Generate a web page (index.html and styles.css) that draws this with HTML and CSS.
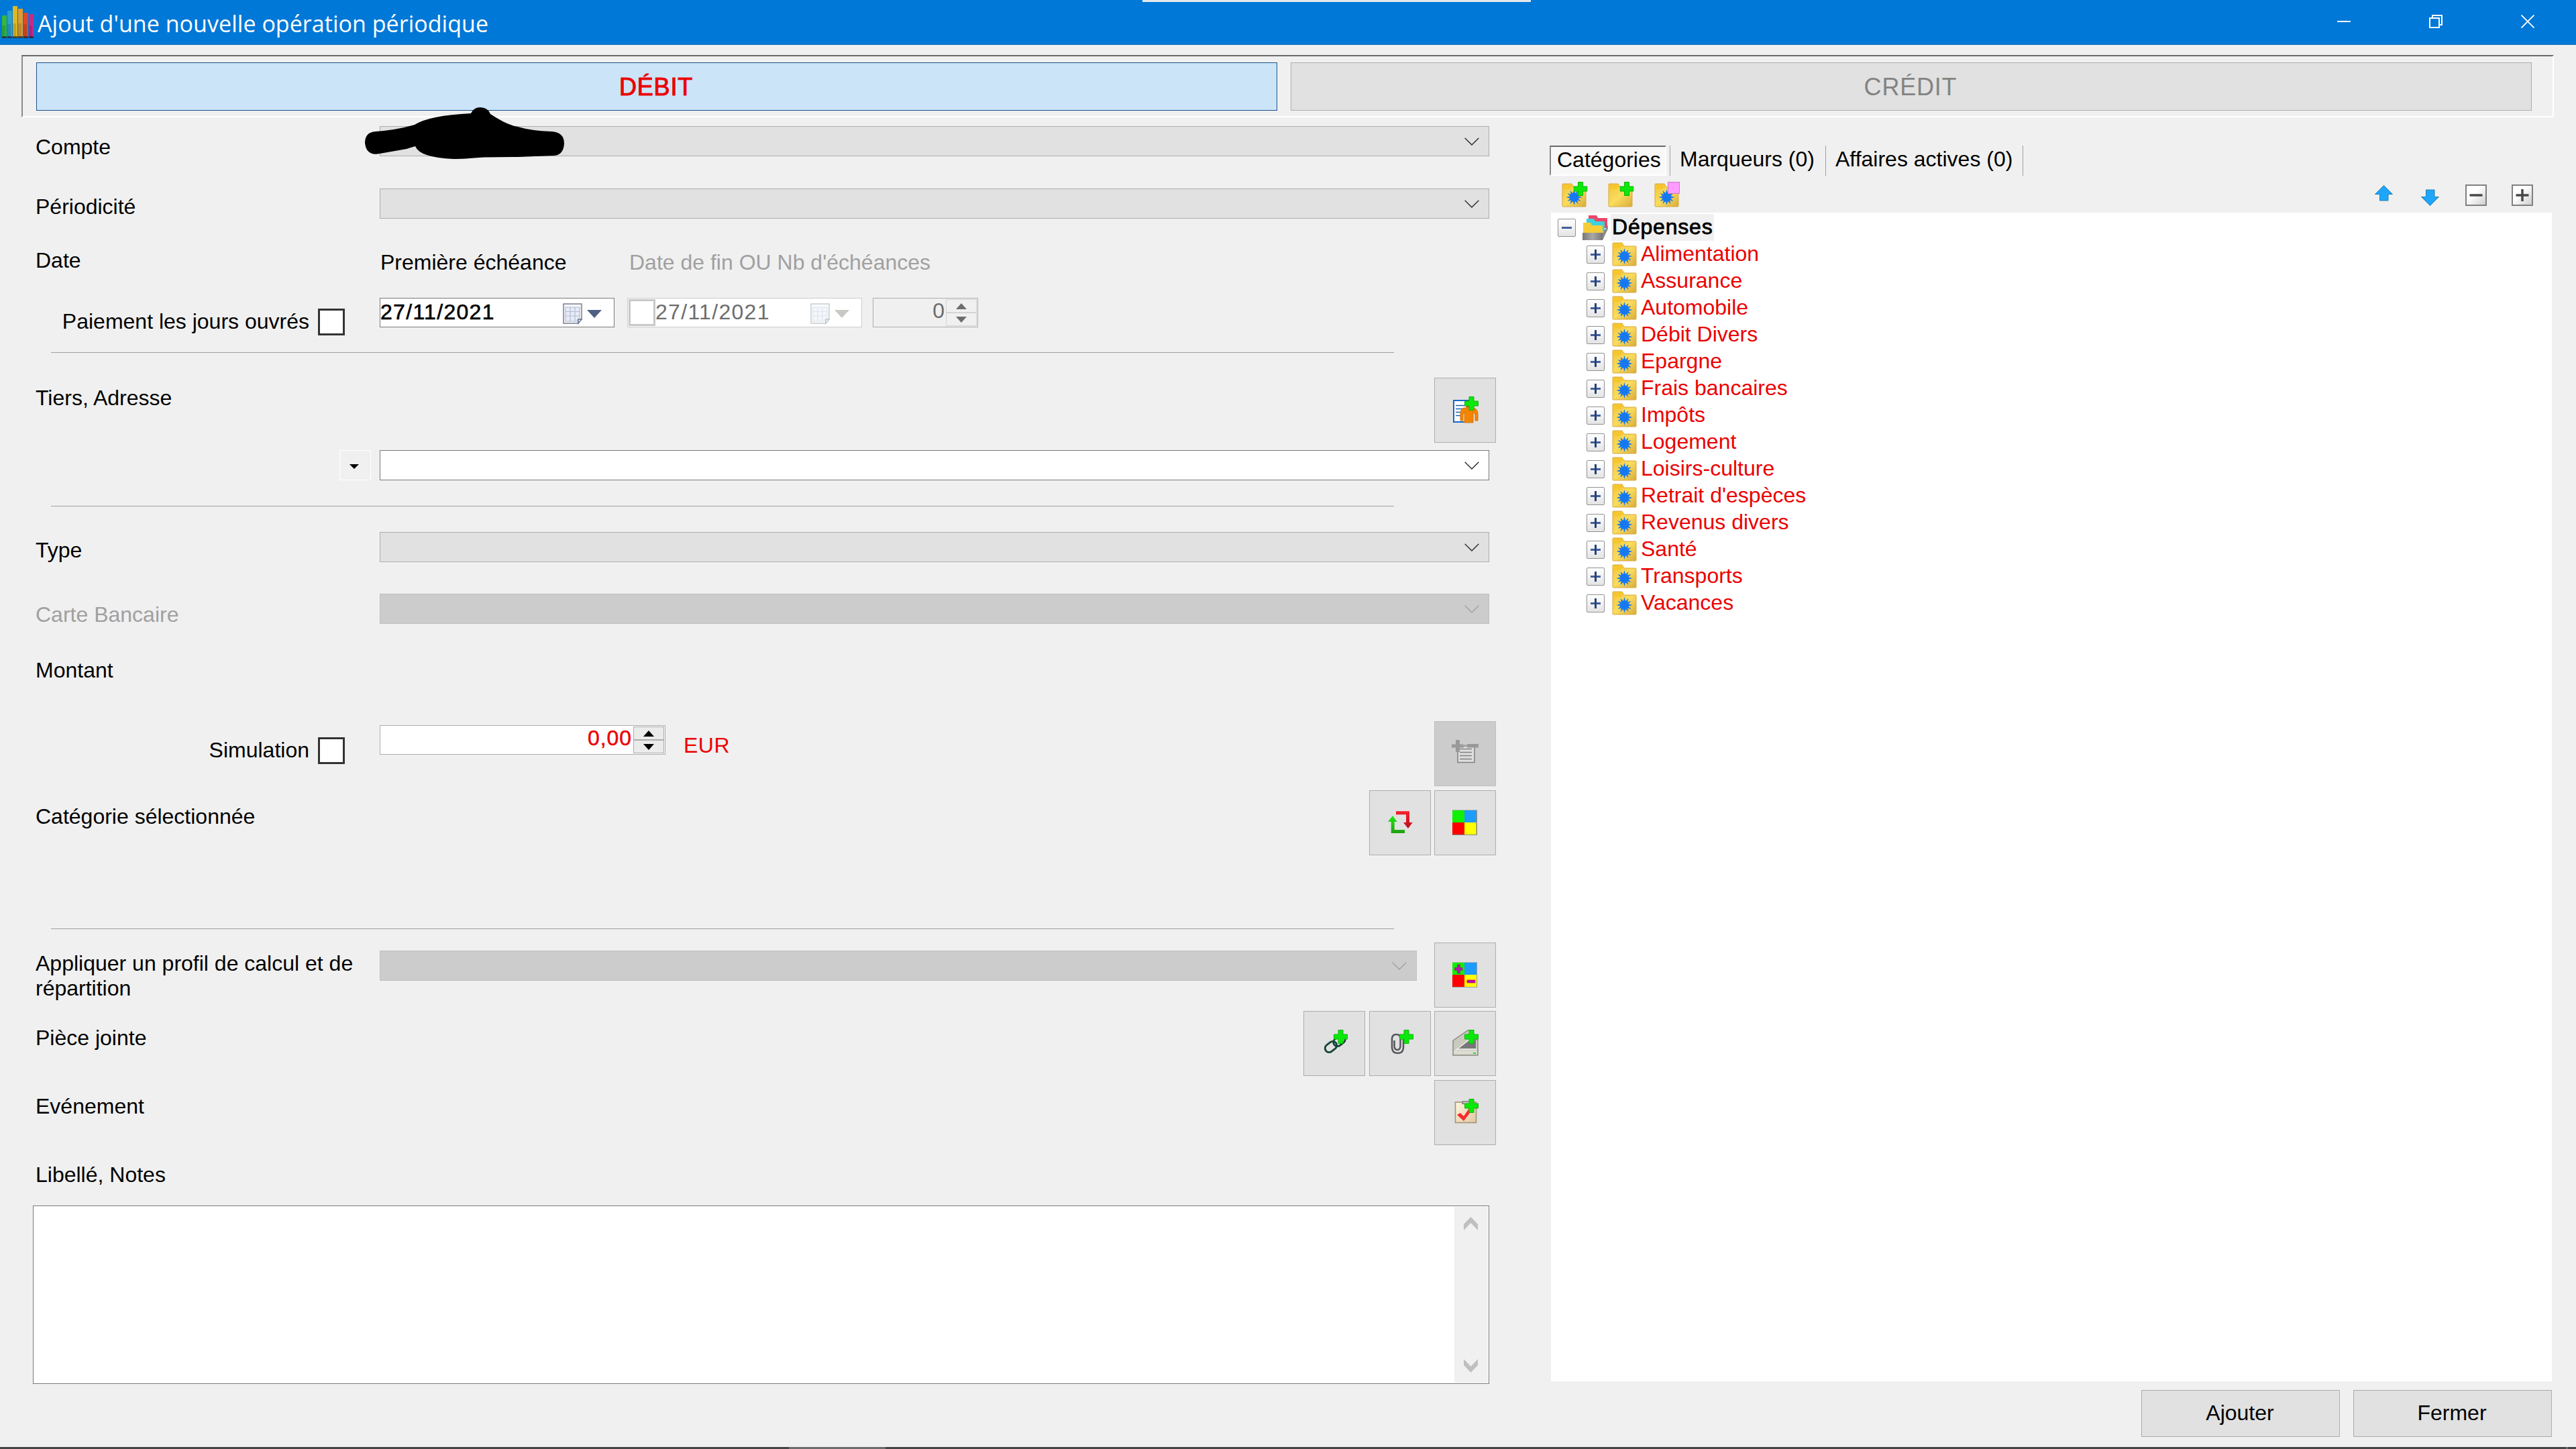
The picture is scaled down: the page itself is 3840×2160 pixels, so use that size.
FILE: index.html
```
<!DOCTYPE html>
<html lang="fr">
<head>
    <meta charset="UTF-8">
    <meta name="viewport" content="width=device-width, initial-scale=1.0">
    <title>Ajout d'une nouvelle opération périodique</title>
    <link rel="stylesheet" href="styles.css">
</head>
<body>
    <!-- Shared icon shapes -->
    <svg class="defs" width="0" height="0">
        <defs>
            <linearGradient id="gFolder" x1="0" y1="0" x2="1" y2="1">
                <stop offset="0" stop-color="#f0c43c"/>
                <stop offset="0.5" stop-color="#fbdc5c"/>
                <stop offset="1" stop-color="#d9ac3c"/>
            </linearGradient>
            <linearGradient id="gBox" x1="0" y1="0" x2="1" y2="1">
                <stop offset="0.4" stop-color="#ffffff"/>
                <stop offset="1" stop-color="#cccccc"/>
            </linearGradient>
            <linearGradient id="gGrey" x1="0" y1="0" x2="1" y2="0">
                <stop offset="0" stop-color="#777777"/>
                <stop offset="0.5" stop-color="#a8a8a8"/>
                <stop offset="1" stop-color="#777777"/>
            </linearGradient>
            <linearGradient id="gPaper" x1="0" y1="0" x2="1" y2="1">
                <stop offset="0" stop-color="#fff6e0"/>
                <stop offset="1" stop-color="#e0c8a0"/>
            </linearGradient>
            <linearGradient id="gRed" x1="0" y1="0" x2="0" y2="1">
                <stop offset="0" stop-color="#f8202c"/>
                <stop offset="1" stop-color="#b8101c"/>
            </linearGradient>
            <linearGradient id="gGreen" x1="0" y1="0" x2="0" y2="1">
                <stop offset="0" stop-color="#20e814"/>
                <stop offset="1" stop-color="#20a010"/>
            </linearGradient>
        </defs>
        <symbol id="chevron" viewBox="0 0 22 12">
            <path d="M0.7 0.7L11 11L21.3 0.7" fill="none" stroke="currentColor" stroke-width="1.5"/>
        </symbol>
        <symbol id="plus" viewBox="0 0 21 21">
            <path d="M7 .5h7V7h6.500v7H14v6.500H7V14H.5V7H7z" fill="#0be90b" stroke="#0bb40b"/>
        </symbol>
        <symbol id="folder" viewBox="0 0 37 36">
            <path d="M1 2q0-1 1-1h13l3 5h17q1 0 1 1v27q0 1-1 1H2q-1 0-1-1z" fill="url(#gFolder)" stroke="#d6a83a"/>
            <path d="M1.500 2h14l2 4h-3l-2 3h-11z" fill="#f6c62e"/>
        </symbol>
        <symbol id="star" viewBox="-12 -12 24 24">
            <path d="M0-12L1.700-6L6-10L4.600-4.600L10-6L6-1.700L12 0L6 1.700L10 6L4.600 4.600L6 10L1.700 6L0 12L-1.700 6L-6 10L-4.600 4.600L-10 6L-6 1.700L-12 0L-6-1.700L-10-6L-4.600-4.600L-6-10L-1.700-6z" fill="#1578f0"/>
        </symbol>
        <symbol id="category" viewBox="0 0 37 36">
            <use href="#folder" width="37" height="36"/>
            <use href="#star" x="6.500" y="9" width="24" height="24"/>
        </symbol>
        <symbol id="calendar" viewBox="0 0 29 32">
            <path d="M1 1h27v23h-5v6H1z" fill="#f4f6fb" stroke="#7a8090" stroke-width="1.500"/>
            <path d="M4 6h21v18h-3v3H4z" fill="#e6ecf7"/>
            <path d="M4 6h21v18h-3v3H4zM4 12.500h21M4 19h21M11 6v21M18 6v21" fill="none" stroke="#b4bccf" stroke-width="1.200"/>
            <path d="M23 30v-6h5z" fill="#fff" stroke="#6a7590" stroke-width="1.500"/>
        </symbol>
    </svg>

    <div class="titlebar">
        <svg class="app-icon" width="50" height="50" viewBox="0 0 50 50">
            <rect x="2" y="15" width="7" height="33" fill="#35b83c"/><rect x="10" y="8" width="7" height="40" fill="#2a9fd0"/>
            <rect x="18" y="1" width="7" height="47" fill="#d9b92c"/><rect x="26" y="5" width="7" height="43" fill="#e79a24"/>
            <rect x="34" y="11" width="7" height="37" fill="#dc4a2e"/><rect x="42" y="13" width="7" height="35" fill="#c22c8c"/>
            <path d="M2 30h5v18H2zM10 28h5v20h-5zM18 27h5v21h-5zM26 27h5v21h-5zM34 28h5v20h-5zM42 30h5v18h-5z" fill="#000" opacity="0.120"/>
            <path d="M2 46h7v3H2zM10 46h7v3h-7zM18 46h7v3h-7zM26 46h7v3h-7zM34 46h7v3h-7zM42 46h7v3h-7z" fill="#222" opacity="0.700"/>
        </svg>
        <span class="title">Ajout d'une nouvelle opération périodique</span>
        <div class="window-controls">
            <svg width="20" height="20" viewBox="0 0 20 20"><path d="M0 10h20" stroke="#fff" stroke-width="2"/></svg>
            <svg width="20" height="20" viewBox="0 0 20 20"><path d="M1 5h14v14H1zM5 5V1h14v14h-4" fill="none" stroke="#fff" stroke-width="2"/></svg>
            <svg width="20" height="20" viewBox="0 0 20 20"><path d="M.5.5l19 19M19.500.5l-19 19" stroke="#fff" stroke-width="1.800"/></svg>
        </div>
        <div class="top-strip"></div>
    </div>

    <div class="type-box">
        <button class="type-btn active">DÉBIT</button>
        <button class="type-btn">CRÉDIT</button>
    </div>

    <div class="main">
        <div class="form">
            <div class="row row-compte">
                <label>Compte</label>
                <div class="combo"><svg><use href="#chevron"/></svg></div>
            </div>
            <div class="row row-periode">
                <label>Périodicité</label>
                <div class="combo"><svg><use href="#chevron"/></svg></div>
            </div>
            <div class="row row-date">
                <label>Date</label>
                <span class="date-title">Première échéance</span>
                <span class="date-title muted">Date de fin OU Nb d'échéances</span>
            </div>
            <div class="row row-dates">
                <div class="check-cell"><span>Paiement les jours ouvrés</span><i class="checkbox"></i></div>
                <div class="date-field">
                    <b>27/11/2021</b>
                    <svg class="cal" width="29" height="32"><use href="#calendar"/></svg>
                    <i class="tri"></i>
                </div>
                <div class="date-field disabled">
                    <i class="checkbox"></i><b>27/11/2021</b>
                    <svg class="cal" width="29" height="32"><use href="#calendar"/></svg>
                    <i class="tri"></i>
                </div>
                <div class="spinner small">
                    <span>0</span>
                    <div class="arrows"><div><i class="up"></i></div><div><i class="down"></i></div></div>
                </div>
            </div>
            <div class="separator"></div>

            <div class="row row-tiers">
                <label>Tiers, Adresse</label>
                <button class="icon-btn">
                    <svg viewBox="1 1 90 95">
                        <rect x="29" y="34" width="24" height="32" fill="#fff" stroke="#1466c8" stroke-width="2"/>
                        <path d="M32 41.500h18M32 46.500h16M32 51.500h9M32 56.500h9" stroke="#1e62b4" stroke-width="1.400"/>
                        <circle cx="52" cy="40" r="6" fill="#d06a10"/>
                        <path d="M44 45h15q6 2 6 9v10h-4V55l-3-4v16H45V51l-2 4v9h-4V54q0-7 5-9z" fill="#f58400" stroke="#cf7610"/>
                        <use href="#plus" x="45" y="28" width="21" height="21"/>
                    </svg>
                </button>
            </div>
            <div class="row row-tiers-combo">
                <div class="drop-btn"><i></i></div>
                <div class="combo editable"><svg><use href="#chevron"/></svg></div>
            </div>
            <div class="separator"></div>

            <div class="row row-type">
                <label>Type</label>
                <div class="combo"><svg><use href="#chevron"/></svg></div>
            </div>
            <div class="row row-carte">
                <label class="muted">Carte Bancaire</label>
                <div class="combo off"><svg><use href="#chevron"/></svg></div>
            </div>
            <div class="row row-montant">
                <label>Montant</label>
            </div>
            <div class="row row-amount">
                <div class="check-cell"><span>Simulation</span><i class="checkbox"></i></div>
                <div class="spinner amount">
                    <span>0,00</span>
                    <div class="arrows"><div><i class="up"></i></div><div><i class="down"></i></div></div>
                </div>
                <span class="currency">EUR</span>
                <button class="icon-btn off">
                    <svg viewBox="1 1 90 95">
                        <rect x="35" y="37" width="25" height="24.500" fill="#dedede" stroke="#808080" stroke-width="1.500"/>
                        <path d="M38 41.500h18M38 46.500h18M38 51.500h18M38 56.500h18" stroke="#808080" stroke-width="1.300"/>
                        <path d="M26 34.500h6V28h6v6.500h6v5h-6V46h-6v-6.500h-6zM49 34h17v5.500H49z" fill="#999"/>
                        <path d="M42 35h8v2h-8z" fill="#aaa"/>
                    </svg>
                </button>
            </div>
            <div class="row row-categorie">
                <label>Catégorie sélectionnée</label>
                <div class="btn-group">
                    <button class="icon-btn">
                        <svg viewBox="1 1 90 95">
                            <path d="M40 31.300h20V48h4.700L58 57l-7-9h4V36.300H40z" fill="url(#gRed)"/>
                            <path d="M35 38l6.700 9h-4v12H53v5H32.700V47H28z" fill="url(#gGreen)"/>
                        </svg>
                    </button>
                    <button class="icon-btn">
                        <svg viewBox="1 1 90 95">
                            <path d="M27 29.500h37V67H27z" fill="#888"/>
                            <path d="M27 30h18v18H27z" fill="#10f000"/><path d="M45 30h17.500v18H45z" fill="#1c9cff"/>
                            <path d="M27 48h18v18H27z" fill="#f00"/><path d="M45 48h17.500v18H45z" fill="#ff0"/>
                        </svg>
                    </button>
                </div>
            </div>
            <div class="separator"></div>

            <div class="row row-profil">
                <label>Appliquer un profil de calcul et de répartition</label>
                <div class="combo off"><svg><use href="#chevron"/></svg></div>
                <button class="icon-btn">
                    <svg viewBox="1 1 90 95">
                        <path d="M27 29.500h37V67H27z" fill="#999"/>
                        <path d="M27 30h18v18H27z" fill="#10f000"/><path d="M45 30h18v18H45z" fill="#1c9cff"/>
                        <path d="M27 48h18v18H27z" fill="#f00"/><path d="M45 48h18v18H45z" fill="#ff0"/>
                        <path d="M34.500 33h4v4.500H42v4h-3.500V46h-4v-4.500H30.500v-4h4z" fill="#b414b4" stroke="#7a4a50"/>
                        <path d="M49 56h12v4H49z" fill="#b000b0" stroke="#e02060"/>
                    </svg>
                </button>
            </div>
            <div class="row row-piece">
                <label>Pièce jointe</label>
                <div class="btn-group">
                    <button class="icon-btn first">
                        <svg viewBox="1 1 90 95">
                            <g fill="none" stroke="#164438" stroke-width="2.800">
                                <rect x="31.500" y="47.500" width="19" height="12" rx="6" transform="rotate(-38 41 53.500)"/>
                                <rect x="44" y="38.500" width="19" height="12" rx="6" transform="rotate(-38 53.500 44.500)"/>
                            </g>
                            <use href="#plus" x="45" y="28" width="21" height="21"/>
                        </svg>
                    </button>
                    <button class="icon-btn">
                        <svg viewBox="1 1 90 95">
                            <path d="M37.500 44V52q0 6 4.500 6t4.500-6V41q0-6-6-6t-6.500 6v13q0 9 8.500 9t8.500-9V40" fill="none" stroke="#55555a" stroke-width="2.500"/>
                            <use href="#plus" x="45" y="28" width="21" height="21"/>
                        </svg>
                    </button>
                    <button class="icon-btn">
                        <svg viewBox="1 1 90 95">
                            <path d="M28 44L50 29h5v14h10v23H28z" fill="#c9c9bd" stroke="#8a8a84" stroke-width="1.500"/>
                            <path d="M29 60L52 44h10v12H36z" fill="#77777a"/>
                            <path d="M29 61l23-18M32 57h31" stroke="#eee" stroke-width="1.500"/>
                            <path d="M29 59h35v6H29z" fill="#dcdcd0"/>
                            <path d="M58 62h4v2h-4z" fill="#1ee01e"/>
                            <use href="#plus" x="45" y="28" width="21" height="21"/>
                        </svg>
                    </button>
                </div>
            </div>
            <div class="row row-event">
                <label>Evénement</label>
                <button class="icon-btn">
                    <svg viewBox="1 1 90 95">
                        <rect x="31.500" y="33" width="31" height="30.500" fill="url(#gPaper)" stroke="#a39478" stroke-width="1.600"/>
                        <rect x="42" y="32" width="11" height="3.500" fill="#ccc" stroke="#555"/>
                        <path d="M34 52l5-3 5 5 8-12 4 3-12 16z" fill="#f62a2a"/>
                        <use href="#plus" x="45" y="28" width="21" height="21"/>
                    </svg>
                </button>
            </div>
            <div class="row row-notes">
                <label>Libellé, Notes</label>
            </div>
            <div class="notes">
                <div class="scrollbar">
                    <svg width="21" height="20" viewBox="0 0 21 20"><path d="M0 11L10.500 0L21 11V20L10.500 9L0 20z" fill="#bfbfbf"/></svg>
                    <svg width="21" height="20" viewBox="0 0 21 20"><path d="M0 0L10.500 11L21 0V9L10.500 20L0 9z" fill="#bfbfbf"/></svg>
                </div>
            </div>
        </div>

        <div class="side">
            <div class="tabs">
                <div class="tab selected">Catégories</div>
                <div class="tab marqueurs">Marqueurs (0)</div>
                <div class="tab affaires">Affaires actives (0)</div>
            </div>
            <div class="toolbar">
                <svg width="39" height="39" viewBox="0 0 39 39">
                    <use href="#folder" y="2" width="37" height="36"/><use href="#star" x="6.500" y="11" width="24" height="24"/>
                    <use href="#plus" x="17.500" y="0" width="21" height="21"/>
                </svg>
                <svg width="39" height="39" viewBox="0 0 39 39">
                    <use href="#folder" y="2" width="37" height="36"/><use href="#plus" x="17.500" y="0" width="21" height="21"/>
                </svg>
                <svg width="39" height="39" viewBox="0 0 39 39">
                    <use href="#folder" y="2" width="37" height="36"/><use href="#star" x="6.500" y="11" width="24" height="24"/>
                    <rect x="20.500" y="0.500" width="17" height="17" fill="#ff9cff" stroke="#c87cc8"/>
                </svg>
                <div class="tools-right">
                    <svg width="32" height="32" viewBox="0 0 32 32"><path d="M16.500 1.500L29.500 14.500H23V24H10.500V14.500H3.500z" fill="#1ea6fa" stroke="#2480ae"/></svg>
                    <svg width="32" height="32" viewBox="0 0 32 32"><path d="M16.500 31.500L29.500 18.500H23V8H10.500V18.500H3.500z" fill="#1ea6fa" stroke="#2480ae"/></svg>
                    <svg width="32" height="32" viewBox="0 0 32 32"><rect x="1" y="1" width="30" height="30" fill="url(#gBox)" stroke="#808080" stroke-width="2"/><path d="M6.500 16h19" stroke="#484848" stroke-width="3.500"/></svg>
                    <svg width="32" height="32" viewBox="0 0 32 32"><rect x="1" y="1" width="30" height="30" fill="url(#gBox)" stroke="#808080" stroke-width="2"/><path d="M6.500 16h19M16 7v18" stroke="#484848" stroke-width="3.500"/></svg>
                </div>
            </div>
            <div class="tree" id="tree">
                <div class="node root">
                    <i class="expander minus"></i>
                    <svg width="38" height="38" viewBox="0 0 38 38">
                        <path d="M9 1h12l2 4h14v15H9z" fill="#ec4668"/>
                        <path d="M6 6h11l2 4h14v15H6z" fill="#3cd2dc"/>
                        <path d="M38 16v5l-8 17H26l4-11z" fill="#8c8c8c"/>
                        <path d="M1 12h11l2 4h16v12H1z" fill="#f6cc38"/>
                        <path d="M0 27h30v11H0z" fill="url(#gGrey)"/>
                    </svg>
                    <span>Dépenses</span>
                </div>
            </div>
            <div class="actions">
                <button>Ajouter</button>
                <button>Fermer</button>
            </div>
        </div>
    </div>

    <!-- Masked account name -->
    <svg class="mask" width="300" height="80" viewBox="543 159 300 80">
        <path d="M544 213Q544 197 560 196Q590 194 618 186Q640 172 702 169Q706 160 716 160Q727 160 731 170Q757 187 772 189Q792 195 822 196Q841 197 841 214Q840 232 824 232L772 234L721 234.500Q690 237 676 237Q626 235 619 218Q612 220 606 222L566 229Q546 233 544 213z"/>
    </svg>

    <div class="bottom-strip"><i class="active-task"></i><i class="end"></i></div>

    <script>
        const categories = [
            'Alimentation', 'Assurance', 'Automobile', 'Débit Divers', 'Epargne',
            'Frais bancaires', 'Impôts', 'Logement', 'Loisirs-culture',
            "Retrait d'espèces", 'Revenus divers', 'Santé', 'Transports', 'Vacances'
        ];

        const tree = document.getElementById('tree');
        categories.forEach(name => {
            tree.insertAdjacentHTML('beforeend',
                `<div class="node"><i class="expander"></i><svg width="37" height="36"><use href="#category"/></svg><span>${name}</span></div>`);
        });
    </script>
</body>
</html>
```
FILE: styles.css
```
* {
    box-sizing: border-box;
}

body {
    margin: 0;
    width: 3840px;
    height: 2160px;
    overflow: hidden;
    position: relative;
    background-color: #f0f0f0;
    color: #000;
    font-family: "Liberation Sans", Arial, sans-serif;
    font-size: 32px;
    line-height: 37px;
}

svg {
    display: block;
    flex: none;
}

button {
    margin: 0;
    padding: 0;
    border: 1px solid #adadad;
    background-color: #e1e1e1;
    font: inherit;
    color: #000;
}

.defs {
    position: absolute;
}

/* Title bar */
.titlebar {
    position: relative;
    display: flex;
    height: 67px;
    padding-left: 1px;
    background-color: #0078d7;
    border-bottom: 1px solid #1a70b8;
    color: #fff;
}

.app-icon {
    margin-top: 8px;
}

.title {
    margin: 10px 0 0 5px;
    font-family: "Open Sans", "Noto Sans", sans-serif;
    font-size: 34px;
    line-height: 50px;
    letter-spacing: 0.04px;
}

.window-controls {
    display: flex;
    gap: 117px;
    margin: 22px 62px 0 auto;
}

.top-strip {
    position: absolute;
    left: 1703px;
    top: 0;
    width: 579px;
    height: 3px;
    background-color: #e4e8ec;
}

/* Debit / credit switch */
.type-box {
    display: flex;
    gap: 20px;
    width: 3775px;
    height: 93px;
    margin: 15px 0 0 32px;
    padding: 9px 0 0 20px;
    border: 2px solid;
    border-color: #6a6a6a #fff #fff #8a8a8a;
}

.type-btn {
    width: 1850px;
    height: 72px;
    padding-right: 2px;
    font-size: 36px;
    letter-spacing: 0.8px;
    color: #838383;
}

.type-btn.active {
    background-color: #cce4f7;
    border-color: #1a5288;
    color: #eb0000;
    -webkit-text-stroke: 1px #eb0000;
}

/* Layout */
.main {
    display: flex;
    height: 1982px;
}

.form {
    width: 2310px;
}

.row {
    display: flex;
    align-items: flex-start;
    width: 2230px;
    padding-left: 53px;
}

.row label {
    width: 513px;
    flex: none;
    padding: 1px 20px 0 0;
}

.muted {
    color: #a0a0a0;
}

.separator {
    width: 2002px;
    height: 1px;
    margin-left: 76px;
    background-color: #a0a0a0;
}

/* Combo boxes */
.combo {
    display: flex;
    justify-content: flex-end;
    width: 1654px;
    height: 45px;
    padding: 16px 14px 0 0;
    border: 1px solid #adadad;
    background-color: #e1e1e1;
    color: #333;
}

.combo svg {
    width: 22px;
    height: 12px;
}

.combo.editable {
    background-color: #fff;
    border-color: #7a7a7a;
}

.combo.off {
    background-color: #ccc;
    border-color: #bfbfbf;
    color: #a3a3a3;
}

.icon-btn {
    width: 92px;
    height: 97px;
    margin-left: auto;
}

.icon-btn svg {
    width: 90px;
    height: 95px;
}

.icon-btn.off {
    background-color: #ccc;
    border-color: #bfbfbf;
}

.btn-group {
    display: flex;
    gap: 5px;
    margin-left: auto;
}

.icon-btn.first {
    margin-right: 1px;
}

/* Rows */
.row-compte {
    height: 95px;
    padding-top: 13px;
}

.row-compte label {
    margin-top: 12px;
}

.row-periode {
    height: 90px;
    padding-top: 11px;
}

.row-periode label {
    margin-top: 8px;
}

.row-date {
    height: 80px;
    padding-top: 9px;
}

.date-title {
    margin: 4px 0 0 1px;
    width: 370px;
    white-space: nowrap;
}

.row-dates {
    height: 85px;
    padding-top: 4px;
}

.row-tiers {
    height: 145px;
    padding-top: 37px;
}

.row-tiers label {
    margin-top: 11px;
}

.row-tiers-combo {
    height: 83px;
}

.row-type {
    height: 130px;
    padding-top: 38px;
}

.row-type label {
    margin-top: 8px;
}

.row-carte {
    height: 85px;
}

.row-carte label {
    margin-top: 12px;
}

.row-montant {
    height: 100px;
    padding-top: 10px;
}

.row-amount {
    height: 108px;
    padding-top: 5px;
}

.row-amount .spinner {
    margin-top: 6px;
}

.row-amount .check-cell {
    padding-top: 24px;
}

.row-categorie {
    height: 206px;
}

.row-categorie label {
    margin-top: 20px;
}

.row-profil {
    height: 122px;
    padding-top: 20px;
}

.row-profil label {
    margin-top: 12px;
}

.row-profil .combo {
    width: 1546px;
    margin-top: 12px;
}

.row-piece {
    height: 103px;
}

.row-piece label {
    margin-top: 21px;
}

.row-event {
    height: 110px;
}

.row-event label {
    margin-top: 20px;
}

.row-notes {
    height: 77px;
    padding-top: 12px;
}

/* Check boxes */
.check-cell {
    display: flex;
    justify-content: flex-end;
    width: 461px;
    margin-right: 52px;
    padding-top: 16px;
}

.check-cell span {
    margin: 1px 13px 0 0;
}

.checkbox {
    display: block;
    flex: none;
    width: 40px;
    height: 40px;
    border: 3px solid #333;
    background-color: #fff;
}

/* Date pickers */
.date-field {
    display: flex;
    width: 350px;
    height: 44px;
    margin-right: 19px;
    border: 1px solid #7a7a7a;
    background-color: #fff;
}

.date-field b {
    width: 272px;
    padding-top: 2px;
    font-weight: normal;
    letter-spacing: 1.3px;
    -webkit-text-stroke: 0.6px currentColor;
}

.date-field .cal {
    margin-top: 7px;
}

.date-field .tri {
    margin: 17px 0 0 7px;
    border: solid transparent;
    border-width: 12px 11px 0;
    border-top-color: #4d6185;
    height: 0;
}

.date-field.disabled {
    margin-right: 16px;
    border-color: #ccc;
    color: #6d6d6d;
}

.date-field.disabled .checkbox {
    margin: 1px 0 0 1px;
    border-color: #c8c8c8;
}

.date-field.disabled b {
    width: 231px;
    -webkit-text-stroke: 0;
}

.date-field.disabled .cal {
    opacity: 0.4;
}

.date-field.disabled .tri {
    border-top-color: #c8c8c4;
}

/* Numeric spinners */
.spinner {
    display: flex;
    justify-content: flex-end;
    height: 44px;
    border: 1px solid #adadad;
}

.spinner.small {
    width: 157px;
    color: #6d6d6d;
}

.spinner.amount {
    width: 426px;
    background-color: #fff;
    color: #eb0000;
}

.spinner.amount span {
    -webkit-text-stroke: 0.5px #eb0000;
    letter-spacing: 0.9px;
}

.arrows {
    display: flex;
    flex-direction: column;
    width: 46px;
    margin: 1px 1px 1px 2px;
}

.arrows div {
    display: flex;
    justify-content: center;
    align-items: center;
    flex: 1;
    border: 1px solid #d4d4d4;
}

.amount .arrows div {
    border-color: #adadad;
    background-color: #ebebeb;
}

.arrows i {
    border: solid transparent;
    border-width: 0 8px;
}

.arrows .up {
    border-bottom: 9px solid #6d6d6d;
}

.arrows .down {
    border-top: 9px solid #6d6d6d;
}

.amount .arrows .up {
    border-bottom-color: #000;
}

.amount .arrows .down {
    border-top-color: #000;
}

.currency {
    margin: 18px 0 0 27px;
    color: #eb0000;
    letter-spacing: 0.5px;
}

.drop-btn {
    width: 47px;
    height: 45px;
    margin: 0 13px 0 453px;
    padding: 20px 0 0 14px;
    border: 1px solid #fff;
}

.drop-btn i {
    display: block;
    width: 0;
    border: solid transparent;
    border-width: 7px 7px 0;
    border-top-color: #000;
}

/* Notes */
.notes {
    display: flex;
    justify-content: flex-end;
    width: 2171px;
    height: 266px;
    margin-left: 49px;
    padding: 1px;
    border: 1px solid #7a7a7a;
    background-color: #fff;
}

.scrollbar {
    display: flex;
    flex-direction: column;
    justify-content: space-between;
    width: 50px;
    padding: 15px 0 15px 14px;
    background-color: #f0f0f0;
}

/* Right panel */
.side {
    width: 1494px;
    padding-top: 42px;
}

.tabs {
    display: flex;
    height: 45px;
}

.tab {
    height: 45px;
    padding-top: 2px;
    border-right: 1px solid #a0a0a0;
}

.tab.selected {
    width: 174px;
    margin-right: 5px;
    padding: 1px 0 0 9px;
    border: 2px solid;
    border-color: #6a6a6a #fff #fff #8a8a8a;
    background-color: #f8f8f8;
}

.tab.marqueurs {
    width: 233px;
    padding-left: 14px;
    border-left: 1px solid #a0a0a0;
}

.tab.affaires {
    width: 294px;
    padding-left: 14px;
}

.toolbar {
    display: flex;
    gap: 30px;
    height: 55px;
    padding: 9px 28px 0 18px;
}

.tools-right {
    display: flex;
    gap: 37px;
    margin: 4px 0 0 auto;
}

.tree {
    height: 1742px;
    margin-left: 2px;
    padding-top: 2px;
    background-color: #fff;
}

.node {
    display: flex;
    align-items: center;
    height: 40px;
    padding-left: 53px;
    color: #eb0000;
}

.node svg {
    margin-left: 11px;
}

.node span {
    margin: 0 0 1px 6px;
}

.node.root {
    padding-left: 10px;
    color: #000;
}

.node.root svg {
    margin-left: 10px;
}

.node.root span {
    width: 154px;
    height: 40px;
    margin: 0 0 0 4px;
    padding: 1px 2px 0;
    background-color: #f0f0f0;
    letter-spacing: 0.8px;
    -webkit-text-stroke: 0.8px #000;
}

.expander {
    position: relative;
    width: 27px;
    height: 27px;
    border: 1px solid #919191;
    border-radius: 2px;
    background: linear-gradient(#fff, #e4e4e4);
}

/* plus and minus strokes */
.expander::before,
.expander::after {
    content: "";
    position: absolute;
    left: 5px;
    top: 11px;
    width: 15px;
    height: 3px;
    background-color: #42609c;
}

.expander::after {
    left: 11px;
    top: 5px;
    width: 3px;
    height: 15px;
    background-color: #27407a;
}

.expander.minus::after {
    display: none;
}

.actions {
    display: flex;
    justify-content: flex-end;
    gap: 20px;
    padding-top: 13px;
}

.actions button {
    width: 296px;
    height: 70px;
    padding: 0 2px 2px 0;
}

.mask {
    position: absolute;
    left: 543px;
    top: 159px;
}

.bottom-strip {
    position: absolute;
    left: 0;
    bottom: 0;
    width: 3840px;
    height: 3px;
    background-color: #444;
}

.bottom-strip i {
    position: absolute;
    left: 1176px;
    width: 144px;
    height: 3px;
    background-color: #6c6c6c;
}

.bottom-strip .end {
    left: 3825px;
    width: 3px;
}
```
